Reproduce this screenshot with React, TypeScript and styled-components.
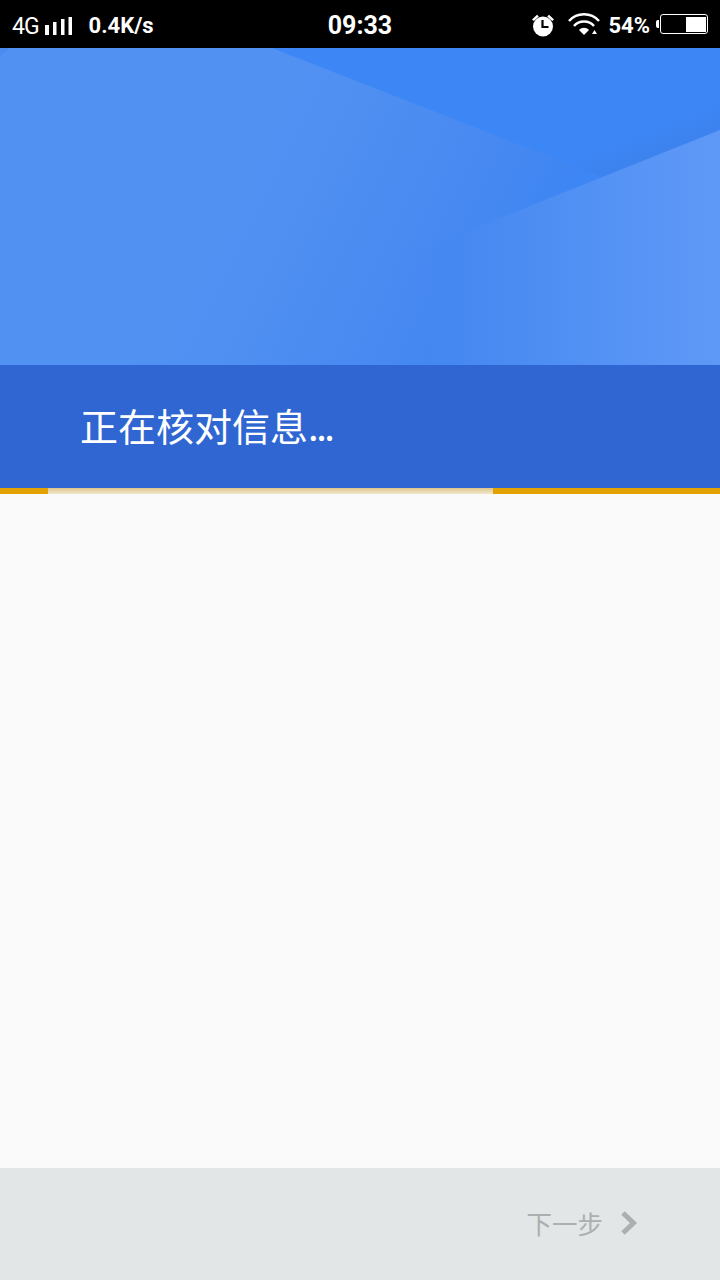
import styled, { createGlobalStyle } from 'styled-components';

const GlobalStyle = createGlobalStyle`
  html, body {
    margin: 0;
    padding: 0;
    background: #fafafa;
  }
  * {
    box-sizing: border-box;
  }
`;

const Page = styled.div`
  width: 720px;
  height: 1280px;
  display: flex;
  flex-direction: column;
  background: #fafafa;
  overflow: hidden;
  font-family: Roboto, "Noto Sans CJK SC", sans-serif;
`;

const StatusBar = styled.div`
  height: 48px;
  flex: none;
  background: #000;
  color: #fff;
  display: grid;
  grid-template-columns: 1fr auto 1fr;
  align-items: center;
`;

const StatusLeft = styled.div`
  display: flex;
  align-items: center;
  padding-left: 12px;
`;

const StatusRight = styled.div`
  display: flex;
  align-items: center;
  justify-content: flex-end;
  padding-right: 12px;
`;

const NetworkType = styled.span`
  font-size: 23px;
  font-weight: 400;
  letter-spacing: -1px;
  line-height: 28px;
  margin-top: 6px;
`;

const SignalIcon = styled.svg`
  margin: 4px 0 0 6px;
`;

const Speed = styled.span`
  font-size: 22px;
  font-weight: 700;
  line-height: 28px;
  margin-left: 16px;
  margin-top: 3px;
`;

const Clock = styled.span`
  font-size: 25px;
  font-weight: 700;
  line-height: 28px;
  margin-top: 3px;
`;

const AlarmIcon = styled.svg`
  margin-top: 1px;
`;

const WifiIcon = styled.svg`
  margin-left: 12px;
`;

const Percent = styled.span`
  font-size: 22px;
  font-weight: 700;
  line-height: 28px;
  margin: 3px 6px 0 7px;
`;

const BatteryNub = styled.div`
  width: 3px;
  height: 8px;
  background: #fff;
  border-radius: 2px 0 0 2px;
  margin-right: 1px;
`;

const Battery = styled.div`
  width: 48px;
  height: 20px;
  border: 1.5px solid #fff;
  border-radius: 3px;
  padding: 1.5px;
  display: flex;
  justify-content: flex-end;
`;

const BatteryFill = styled.div`
  width: 20px;
  background: #fff;
`;

const Hero = styled.div`
  height: 317px;
  flex: none;
  background: #5191f2;
`;

const HeroArt = styled.svg`
  display: block;
  width: 720px;
  height: 317px;
`;

const Banner = styled.div`
  height: 123px;
  flex: none;
  background: #2f66d2;
  color: #fff;
  display: flex;
  align-items: center;
  padding: 0 0 4px 80px;
`;

const Title = styled.h1`
  margin: 0;
  font-family: "Noto Sans CJK SC", sans-serif;
  font-size: 38px;
  font-weight: 400;
  line-height: 50px;
  letter-spacing: 0;
`;

const Dots = styled.span`
  letter-spacing: -2.4px;
`;

const Progress = styled.div`
  height: 6px;
  flex: none;
  background: #e2a200;
  padding: 0 227px 0 48px;
`;

const ProgressGap = styled.div`
  height: 100%;
  background: linear-gradient(#dfc68b, #f1e7cd);
`;

const Content = styled.main`
  flex: 1;
  background: #fafafa;
`;

const Footer = styled.footer`
  height: 112px;
  flex: none;
  background: #e2e6e7;
  display: flex;
  align-items: center;
  justify-content: flex-end;
  padding: 0 82px 2px 0;
`;

const NextButton = styled.button`
  border: 0;
  padding: 0;
  background: none;
  color: #abafaf;
  display: flex;
  align-items: center;
  gap: 17px;
  font-family: "Noto Sans CJK SC", sans-serif;
  font-size: 25.500px;
  line-height: 32px;
`;

export default function App() {
  return (
    <>
      <GlobalStyle />
      <Page>
        <StatusBar>
          <StatusLeft>
            <NetworkType>4G</NetworkType>
            <SignalIcon width="28" height="20" viewBox="0 0 28 20">
              <path d="M0 9h4v10H0zM8 6h3.500v13H8zM16 3h3.500v16H16zM23.500 1H27v18h-3.500z" fill="#fff" />
            </SignalIcon>
            <Speed>0.4K/s</Speed>
          </StatusLeft>
          <Clock>09:33</Clock>
          <StatusRight>
            <AlarmIcon width="24" height="24" viewBox="0 0 24 24">
              <circle cx="12" cy="13.500" r="10" fill="#fff" />
              <path d="M1 6.500 6 1.800l1.800 1.600-5 4.700zM23 6.500 18 1.800l-1.800 1.600 5 4.700z" fill="#fff" />
              <path d="M11.500 7v7h6" fill="none" stroke="#000" strokeWidth="2.200" />
            </AlarmIcon>
            <WifiIcon width="34" height="26" viewBox="0 0 34 26">
              <g fill="none" stroke="#fff" strokeWidth="2.500">
                <path d="M2 10C10 1 24 1 32 10" />
                <path d="M7 15C12 9 22 9 27 15" />
              </g>
              <path d="M12 19c3-3 7-3 10 0l-5 5z" fill="#fff" />
              <path d="M25 23h5l-2.500-4z" fill="#fff" />
            </WifiIcon>
            <Percent>54%</Percent>
            <BatteryNub />
            <Battery>
              <BatteryFill />
            </Battery>
          </StatusRight>
        </StatusBar>
        <Hero>
          <HeroArt viewBox="0 0 720 317">
            <defs>
              <linearGradient id="midShade" gradientUnits="userSpaceOnUse" x1="230" x2="570" y1="100" y2="267">
                <stop offset="0" stopColor="#5191f2" />
                <stop offset="0.2" stopColor="#5090f2" />
                <stop offset="0.66" stopColor="#4688f1" />
                <stop offset="0.85" stopColor="#3e86f4" />
                <stop offset="1" stopColor="#3d86f5" />
              </linearGradient>
              <linearGradient id="topShade" gradientUnits="userSpaceOnUse" x1="650" x2="695" y1="0" y2="112">
                <stop offset="0" stopColor="#3d86f5" />
                <stop offset="0.6" stopColor="#3c86f6" />
                <stop offset="1" stopColor="#3e80e8" />
              </linearGradient>
              <linearGradient id="lowShade" gradientUnits="userSpaceOnUse" x1="395" x2="720" y1="0" y2="0">
                <stop offset="0" stopColor="#4688f1" stopOpacity="0" />
                <stop offset="0.2" stopColor="#4688f1" />
                <stop offset="0.5" stopColor="#4f8ff3" />
                <stop offset="1" stopColor="#5f99f7" />
              </linearGradient>
            </defs>
            <rect x="0" y="0" width="720" height="317" fill="url(#midShade)" />
            <path d="M0 0h10L0 8z" fill="#4a8bf0" />
            <path d="M272 0H720V82L602 129z" fill="url(#topShade)" />
            <path d="M720 82V317H395V212z" fill="url(#lowShade)" />
          </HeroArt>
        </Hero>
        <Banner>
          <Title>
            正在核对信息<Dots>...</Dots>
          </Title>
        </Banner>
        <Progress>
          <ProgressGap />
        </Progress>
        <Content />
        <Footer>
          <NextButton>
            下一步
            <svg width="18" height="26" viewBox="0 0 18 26">
              <path d="M3 3 13.500 13 3 23" fill="none" stroke="#abafaf" strokeWidth="5" />
            </svg>
          </NextButton>
        </Footer>
      </Page>
    </>
  );
}
